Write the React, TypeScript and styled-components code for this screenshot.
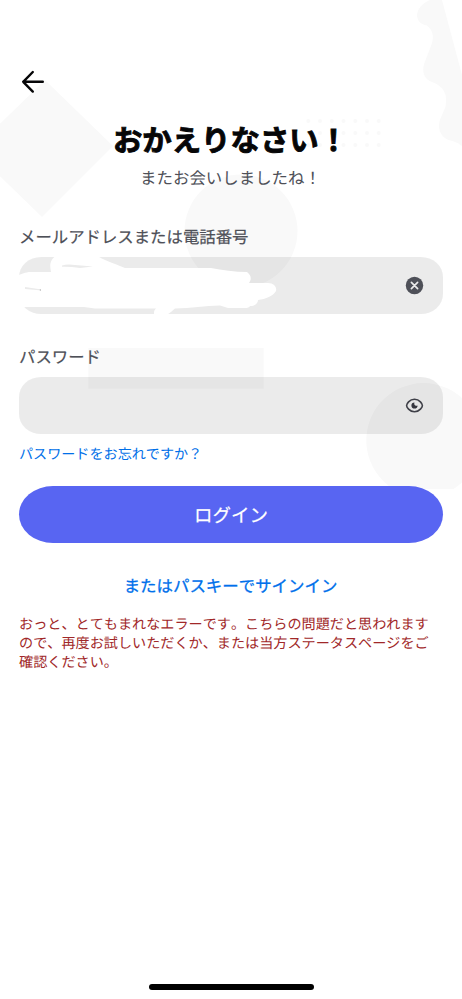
import React from "react";
import styled, { createGlobalStyle } from "styled-components";

const GlobalStyle = createGlobalStyle`
  * { box-sizing: border-box; }
  html, body { margin: 0; padding: 0; background: #fff; }
  body, button, input {
    font-family: "Noto Sans CJK JP", "Noto Sans", sans-serif;
    font-kerning: none;
    text-rendering: geometricPrecision;
    -webkit-font-smoothing: antialiased;
  }
`;

const Screen = styled.main`
  position: relative;
  display: flex;
  flex-direction: column;
  width: 462px;
  height: 999px;
  padding: 66px 19px 9px;
  overflow: hidden;
  background: #fff;
`;

const Backdrop = styled.svg`
  position: absolute;
  inset: 0;
  pointer-events: none;
`;

const Content = styled.div`
  position: relative;
  display: flex;
  flex-direction: column;
  flex: 1;
`;

const BackButton = styled.button`
  display: flex;
  align-items: center;
  justify-content: center;
  width: 28px;
  height: 32px;
  padding: 0;
  border: 0;
  background: none;
`;

const Heading = styled.header`
  display: flex;
  flex-direction: column;
  align-items: center;
  margin-top: 21px;
`;

const Title = styled.h1`
  margin: 0;
  padding-right: 1px;
  color: #060607;
  font-size: 29.4px;
  font-weight: 700;
  line-height: 40px;
  white-space: nowrap;
  -webkit-text-stroke: 0.9px #060607;
`;

const Subtitle = styled.p`
  margin: 6px 0 0;
  padding-right: 1px;
  color: #4e5058;
  font-size: 16.45px;
  line-height: 24px;
  white-space: nowrap;
`;

const Field = styled.section<{ $gap: number }>`
  display: flex;
  flex-direction: column;
  margin-top: ${(p) => p.$gap}px;
`;

const Label = styled.label`
  color: #4e5058;
  font-size: 16.4px;
  font-weight: 400;
  line-height: 24px;
  -webkit-text-stroke: 0.2px #4e5058;
`;

const InputBox = styled.div`
  position: relative;
  display: flex;
  align-items: center;
  height: 56.6px;
  margin-top: 9px;
  padding-right: 19px;
  border-radius: 22px / 20px;
  background: rgba(0, 0, 0, 0.08);
`;

const TextInput = styled.input`
  flex: 1;
  min-width: 0;
  height: 100%;
  padding: 0 16px;
  border: 0;
  outline: 0;
  background: transparent;
  font-size: 16px;
`;

const IconButton = styled.button`
  display: flex;
  padding: 0;
  border: 0;
  background: none;
`;

const Scribble = styled.svg`
  position: absolute;
  left: -1px;
  top: -2px;
  pointer-events: none;
`;

const ForgotLink = styled.a`
  align-self: flex-start;
  margin-top: 8.6px;
  color: #006fe8;
  font-size: 14.1px;
  line-height: 22px;
`;

const LoginButton = styled.button`
  height: 57px;
  margin-top: 21.6px;
  padding: 0;
  border: 0;
  border-radius: 34px / 28.5px;
  background: #5865f2;
  color: #fff;
  font-size: 18.5px;
  font-weight: 400;
  -webkit-text-stroke: 0.2px #fff;
`;

const PasskeyLink = styled.a`
  align-self: center;
  margin-top: 30px;
  padding-right: 1px;
  color: #0070eb;
  font-size: 16.45px;
  font-weight: 400;
  line-height: 24px;
  -webkit-text-stroke: 0.3px #0070eb;
`;

const ErrorText = styled.p`
  margin: 18px -4px 0 0;
  color: #a12829;
  font-size: 14.14px;
  line-height: 19px;
  white-space: pre;
`;

const HomeIndicator = styled.div`
  align-self: center;
  width: 165px;
  height: 6px;
  margin-top: auto;
  border-radius: 3px;
  background: #000;
`;

const dotColumns = [308.3, 320, 331.8, 343.5, 355.3, 367, 378.7];
const dotRows = [121, 133, 145];

function Shapes() {
  return (
    <Backdrop width="462" height="999" viewBox="0 0 462 999" fill="#f9f9f9" aria-hidden="true">
      <path d="M45 80 L113 146 L42 217 L-27 150 Z" />
      <path d="M430 0 C421 4 417 10 417 16 C418 22 421 24 427 25.5 C434 31 434 39 431 46 L424 64 C422 72 424 79 432 82 C444 86 448 95 445.5 107 C442 116 439 119 439 127 C440 137 447 140 454 141.5 Q459 143 462 146 V75 L442 0 Z" />
      {dotRows.map((y) => dotColumns.map((x) => <circle key={`${x}-${y}`} cx={x} cy={y} r="2" />))}
      <circle cx="241" cy="231" r="56.5" />
      <rect x="88.3" y="348" width="175.4" height="40.7" />
      <path d="M393.5 489 A57.2 57.2 0 1 1 453.5 489 Z" />
    </Backdrop>
  );
}

export default function App() {
  return (
    <>
      <GlobalStyle />
      <Screen>
        <Shapes />
        <Content>
          <BackButton aria-label="戻る">
            <svg width="24" height="24" viewBox="0 0 24 24" fill="none" stroke="#060607" strokeWidth="2.4" strokeLinecap="round" strokeLinejoin="round">
              <path d="M21.8 11.8H2.2M11.8 2L2.2 11.8L11.8 21.6" />
            </svg>
          </BackButton>
          <Heading>
            <Title>おかえりなさい！</Title>
            <Subtitle>またお会いしましたね！</Subtitle>
          </Heading>
          <Field $gap={35}>
            <Label htmlFor="account">メールアドレスまたは電話番号</Label>
            <InputBox>
              <TextInput id="account" />
              <Scribble width="262" height="62" viewBox="18 255 262 62" aria-hidden="true">
                <path
                  fill="#fff"
                  d="M17 275 C22 275 24 272 31 272 H51 C49 263 51 259 57 255 H96 C103 260 113 263 125 268 H211 C222 270 235 272 247 272 C251 275 252 279 249 283 H268 C274 283 277 287 276 291 C273 296 266 299 258 300 C258 304 254 306 250 306 Q249 308 245 308 H228 L220 305.5 C205 306 191 308 175 308.5 C170 313 167 315 162 317 H154 V312 Q154 310 156 308.5 H95 L84 307 H17 Z"
                />
                <path fill="#ebebeb" d="M62 265.5 Q67 264 75 265 L93 266.6 L80 268 Q70 266.4 62 266.7Z M25 287 L40 289.3 L39 290.3 L25 289Z" />
                <circle cx="40.3" cy="290" r=".7" fill="#aaa" />
              </Scribble>
              <IconButton aria-label="クリア">
                <svg width="19" height="19" viewBox="0 0 19 19">
                  <circle cx="9.5" cy="9.5" r="8.7" fill="#4e5058" />
                  <path d="M6.4 6.4L12.6 12.6M12.6 6.4L6.4 12.6" stroke="#ebebeb" strokeWidth="1.7" strokeLinecap="round" />
                </svg>
              </IconButton>
            </InputBox>
          </Field>
          <Field $gap={30.8}>
            <Label htmlFor="password">パスワード</Label>
            <InputBox>
              <TextInput id="password" type="password" />
              <IconButton aria-label="パスワードを表示">
                <svg width="19" height="19" viewBox="0 0 19 19" fill="none">
                  <path d="M1.6 9.5C1.6 8.2 4.2 3.2 9.5 3.2S17.4 8.2 17.4 9.5S14.8 15.8 9.5 15.8S1.6 10.8 1.6 9.5Z" stroke="#3f4048" strokeWidth="1.6" />
                  <path d="M9.5 6.4A3.1 3.1 0 1 0 12.6 9.5C12 10 10.8 9.9 10 9.2C9.2 8.4 9.1 7.2 9.5 6.4Z" fill="#34353d" />
                </svg>
              </IconButton>
            </InputBox>
          </Field>
          <ForgotLink>パスワードをお忘れですか？</ForgotLink>
          <LoginButton>ログイン</LoginButton>
          <PasskeyLink>またはパスキーでサインイン</PasskeyLink>
          <ErrorText>
            {"おっと、とてもまれなエラーです。こちらの問題だと思われます\nので、再度お試しいただくか、または当方ステータスページをご\n確認ください。"}
          </ErrorText>
          <HomeIndicator />
        </Content>
      </Screen>
    </>
  );
}
